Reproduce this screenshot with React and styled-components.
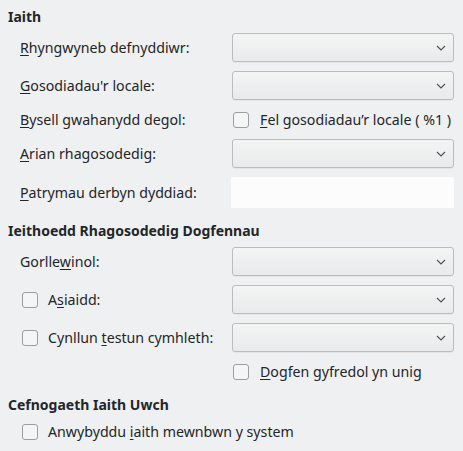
import React from "react";
import styled, { createGlobalStyle } from "styled-components";

const Global = createGlobalStyle`
  html, body {
    margin: 0;
    background: #eff0f1;
  }
  body {
    font-family: "Noto Sans", "DejaVu Sans", sans-serif;
    font-size: 14.2px;
    color: #232629;
  }
`;

const Page = styled.div`
  width: 463px;
  height: 451px;
  box-sizing: border-box;
  padding: 7px 9px 0 8px;
  background: #eff0f1;
`;

const Section = styled.section`
  margin-top: ${(p) => (p.first ? 0 : 13)}px;
`;

const Header = styled.div`
  font-weight: bold;
  font-size: 14px;
  line-height: 20px;
  height: 20px;
  margin-bottom: ${(p) => p.after || 6}px;
`;

const Grid = styled.div`
  display: grid;
  grid-template-columns: 212px 222px;
  row-gap: 9px;
  padding-left: 12px;
`;

const Label = styled.div`
  display: flex;
  align-items: center;
  height: ${(p) => p.h || 29}px;
  white-space: nowrap;
  padding-left: ${(p) => p.indent || 0}px;
`;

const Cell = styled.div`
  display: flex;
  align-items: center;
  height: ${(p) => p.h || 29}px;
  white-space: nowrap;
  padding-left: ${(p) => p.indent || 0}px;
`;

const Key = styled.span`
  text-decoration: underline;
  text-underline-offset: 2px;
  text-decoration-thickness: 1px;
`;

const Combo = styled.div`
  width: 100%;
  height: 29px;
  box-sizing: border-box;
  border: 1px solid #babcbe;
  border-radius: 3px;
  background: linear-gradient(#f3f4f4, #e9eaeb);
  display: flex;
  align-items: center;
  justify-content: flex-end;
  padding-right: 7px;
  box-shadow: 0 1px 0 rgba(0, 0, 0, 0.04);
`;

const LineEdit = styled.div`
  width: 224px;
  height: 31px;
  margin-left: -1px;
  background: #fcfcfc;
`;

const Box = styled.span`
  display: inline-block;
  width: 14px;
  height: 14px;
  border: 1px solid #9c9ea1;
  border-radius: 3px;
  background: #f4f5f5;
  margin-right: ${(p) => p.gap || 10}px;
  flex: none;
`;

const Chevron = () => (
  <svg width="10" height="6" viewBox="0 0 10 6">
    <path d="M1 1 L5 5 L9 1" fill="none" stroke="#4d4f52" strokeWidth="1.1" />
  </svg>
);

const Check = ({ children, gap }) => (
  <>
    <Box gap={gap} />
    <span>{children}</span>
  </>
);

export default function App() {
  return (
    <Page>
      <Global />
      <Section first>
        <Header>Iaith</Header>
        <Grid>
          <Label>
            <span><Key>R</Key>hyngwyneb defnyddiwr:</span>
          </Label>
          <Cell><Combo><Chevron /></Combo></Cell>

          <Label>
            <span><Key>G</Key>osodiadau'r locale:</span>
          </Label>
          <Cell><Combo><Chevron /></Combo></Cell>

          <Label h={21}>
            <span><Key>B</Key>ysell gwahanydd degol:</span>
          </Label>
          <Cell h={21} indent={1}>
            <Check gap={11}><Key>F</Key>el gosodiadau’r locale ( %1 )</Check>
          </Cell>

          <Label>
            <span><Key>A</Key>rian rhagosodedig:</span>
          </Label>
          <Cell><Combo><Chevron /></Combo></Cell>

          <Label h={31}>
            <span><Key>P</Key>atrymau derbyn dyddiad:</span>
          </Label>
          <Cell h={31}><LineEdit /></Cell>
        </Grid>
      </Section>

      <Section>
        <Header>Ieithoedd Rhagosodedig Dogfennau</Header>
        <Grid>
          <Label>
            <span>Gorlle<Key>w</Key>inol:</span>
          </Label>
          <Cell><Combo><Chevron /></Combo></Cell>

          <Label indent={2}>
            <Check>A<Key>s</Key>iaidd:</Check>
          </Label>
          <Cell><Combo><Chevron /></Combo></Cell>

          <Label indent={2}>
            <Check>Cynllun <Key>t</Key>estun cymhleth:</Check>
          </Label>
          <Cell><Combo><Chevron /></Combo></Cell>

          <Label h={21} />
          <Cell h={21} indent={1}>
            <Check gap={11}><Key>D</Key>ogfen gyfredol yn unig</Check>
          </Cell>
        </Grid>
      </Section>

      <Section>
        <Header after={6}>Cefnogaeth Iaith Uwch</Header>
        <Grid>
          <Label h={21} indent={2}>
            <Check>Anwybyddu <Key>i</Key>aith mewnbwn y system</Check>
          </Label>
        </Grid>
      </Section>
    </Page>
  );
}
